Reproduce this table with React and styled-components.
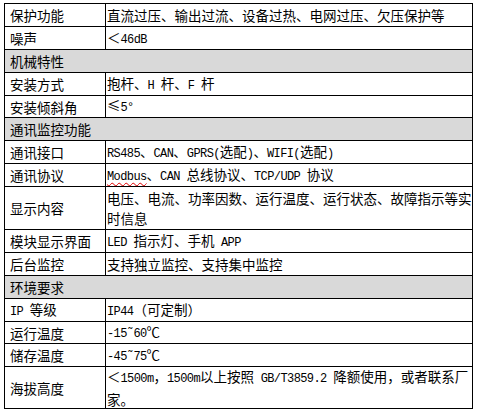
import React from 'react';
import styled, { createGlobalStyle } from 'styled-components';

const Global = createGlobalStyle`
  *, *::before, *::after { box-sizing: border-box; }
  html, body { margin: 0; padding: 0; background: #fff; }
  body { font-family: "Noto Sans CJK SC", sans-serif; color: #000; }
`;

const Sheet = styled.div`
  display: grid;
  grid-template-columns: 101px 367px;
  width: max-content;
  margin: 3px 0 0 4px;
  border-left: 1px solid #000;
  border-top: 1px solid #000;
  font-size: 13.5px;
`;

const Cell = styled.div`
  display: flex;
  align-items: center;
  height: ${(p) => p.$h || 23}px;
  border-right: 1px solid #000;
  border-bottom: 1px solid #000;
  white-space: nowrap;
  overflow: hidden;
  line-height: 20px;
`;

const Label = styled(Cell)`
  padding-left: 5px;
`;

const Value = styled(Cell)`
  padding-left: 1px;
`;

const Section = styled(Cell)`
  grid-column: 1 / -1;
  padding-left: 5px;
  background: #d9d9d9;
`;

const Lines = styled.div`
  display: flex;
  flex-direction: column;
`;

const Lat = styled.span`
  font-family: "Liberation Mono", monospace;
  font-size: 12px;
  letter-spacing: -0.6px;
`;

const Misspelt = styled(Lat)`
  text-decoration: underline wavy #e00000;
  text-decoration-thickness: 1px;
  text-underline-offset: 2px;
`;

const LAT = /([\x21-\x7e ˜°]+)/;
const mix = (s) =>
  s.split(LAT).map((part, i) =>
    i % 2 === 1 ? <Lat key={i}>{part}</Lat> : part
  );

const rows = [
  { l: '保护功能', v: ['直流过压、输出过流、设备过热、电网过压、欠压保护等'] },
  { l: '噪声', v: ['＜46dB'] },
  { s: '机械特性' },
  { l: '安装方式', v: ['抱杆、H 杆、F 杆'] },
  { l: '安装倾斜角', v: ['≤5°'], h: 22 },
  { s: '通讯监控功能' },
  { l: '通讯接口', v: ['RS485、CAN、GPRS(选配)、WIFI(选配)'] },
  { l: '通讯协议', modbus: true },
  { l: '显示内容', v: ['电压、电流、功率因数、运行温度、运行状态、故障指示等实', '时信息'], h: 43 },
  { l: '模块显示界面', v: ['LED 指示灯、手机 APP'] },
  { l: '后台监控', v: ['支持独立监控、支持集中监控'] },
  { s: '环境要求' },
  { l: 'IP 等级', v: ['IP44（可定制）'] },
  { l: '运行温度', v: ['-15˜60℃'], h: 22 },
  { l: '储存温度', v: ['-45˜75℃'] },
  { l: '海拔高度', v: ['＜1500m，1500m以上按照 GB/T3859.2 降额使用，或者联系厂', '家。'], h: 42 },
];

export default function App() {
  return (
    <>
      <Global />
      <Sheet>
        {rows.map((r, i) =>
          r.s ? (
            <Section key={i}>{r.s}</Section>
          ) : (
            <React.Fragment key={i}>
              <Label $h={r.h}>
                <span>{mix(r.l)}</span>
              </Label>
              <Value $h={r.h}>
                {r.modbus ? (
                  <span>
                    <Misspelt>Modbus</Misspelt>、<Lat>CAN </Lat>总线协议、<Lat>TCP/UDP </Lat>协议
                  </span>
                ) : (
                  <Lines>
                    {r.v.map((line, j) => (
                      <span key={j}>{mix(line)}</span>
                    ))}
                  </Lines>
                )}
              </Value>
            </React.Fragment>
          )
        )}
      </Sheet>
    </>
  );
}
